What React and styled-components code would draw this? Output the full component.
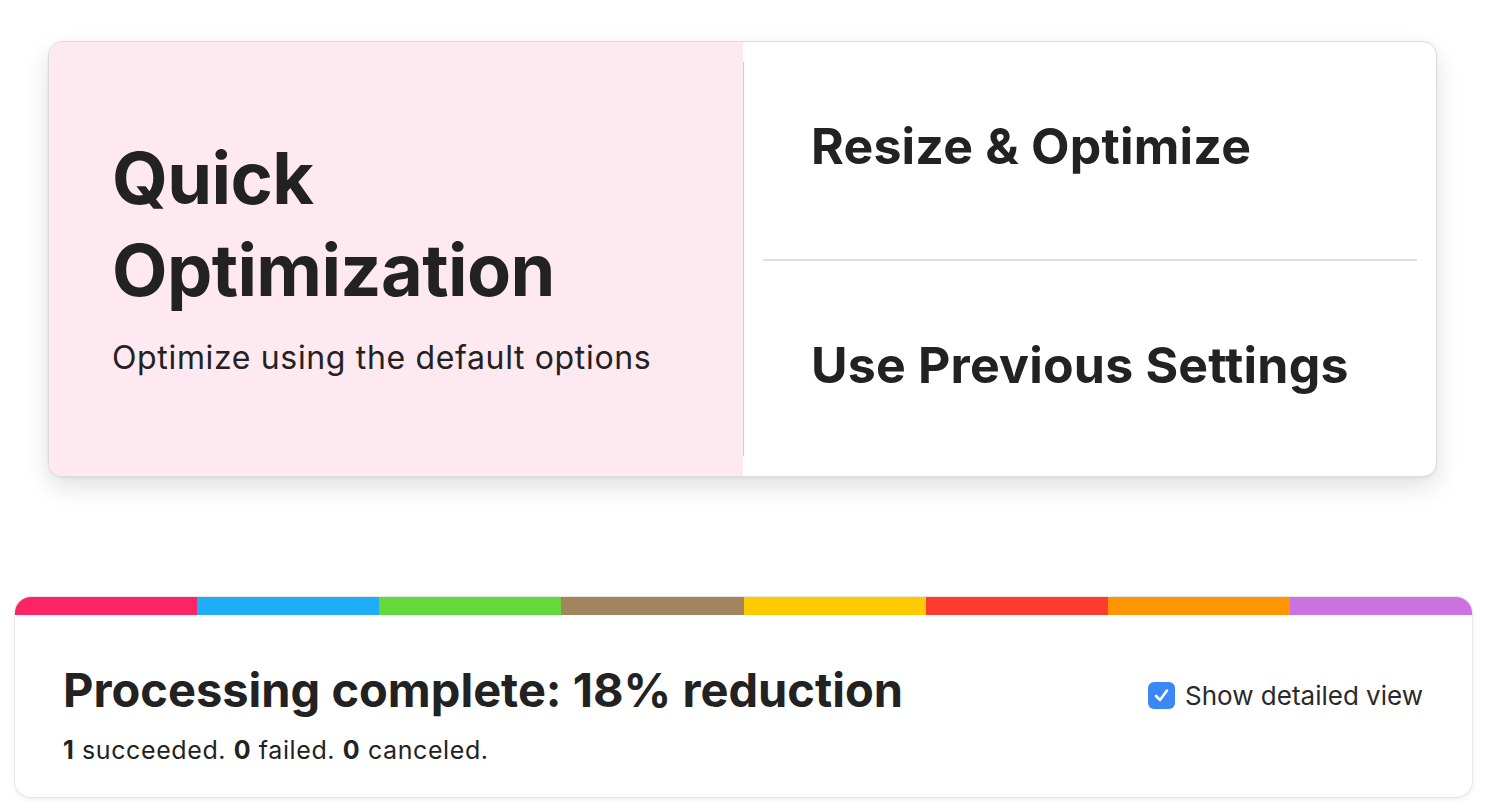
import React from "react";
import styled, { createGlobalStyle } from "styled-components";

const GlobalStyle = createGlobalStyle`
  html, body {
    margin: 0;
    padding: 0;
    background: #fff;
    font-family: Inter, "Noto Sans", sans-serif;
    color: #222;
  }
`;

const Page = styled.div`
  width: 1488px;
  height: 812px;
  padding-top: 41px;
  box-sizing: border-box;
  display: flex;
  flex-direction: column;
`;

const ChoiceCard = styled.div`
  margin-left: 48px;
  width: 1389px;
  height: 436px;
  box-sizing: border-box;
  display: flex;
  border: 1px solid #dcdcdc;
  border-radius: 14px;
  overflow: hidden;
  background: #fff;
  box-shadow: 0 10px 24px rgba(0, 0, 0, 0.12), 0 1px 3px rgba(0, 0, 0, 0.06);
`;

const QuickPane = styled.div`
  width: 694px;
  background: #ffe9f0;
  display: flex;
  flex-direction: column;
  justify-content: center;
  padding: 0 0 8px 63px;
  box-sizing: border-box;
`;

const QuickTitle = styled.h1`
  margin: 0;
  font-size: 72px;
  line-height: 92px;
  font-weight: 700;
  letter-spacing: -0.6px;
  color: #222;
`;

const QuickText = styled.p`
  margin: 22px 0 0;
  font-size: 32px;
  line-height: 40px;
  font-weight: 400;
  letter-spacing: 0.65px;
  color: #222;
`;

const Divider = styled.div`
  width: 1px;
  background: #cfcfcf;
  margin: 20px 0;
`;

const Options = styled.div`
  flex: 1;
  display: flex;
  flex-direction: column;
`;

const Option = styled.button`
  flex: 1;
  border: 0;
  background: transparent;
  text-align: left;
  padding: 0 0 ${(p) => p.$shift}px 67px;
  font-family: Inter, "Noto Sans", sans-serif;
  font-size: 50px;
  font-weight: 700;
  letter-spacing: 0.2px;
  color: #222;
  cursor: pointer;
`;

const Rule = styled.hr`
  margin: -2px 19px 0;
  border: 0;
  height: 2px;
  background: #dedede;
`;

const StatusCard = styled.div`
  margin-top: 120px;
  margin-left: 15px;
  width: 1457px;
  height: 200px;
  box-sizing: border-box;
  border-radius: 16px;
  overflow: hidden;
  background: #fff;
  box-shadow: 0 0 0 1px #e6e6e6, 0 2px 6px rgba(0, 0, 0, 0.08);
  display: flex;
  flex-direction: column;
`;

const ColorBar = styled.div`
  display: flex;
  height: 18px;
`;

const Stripe = styled.div`
  flex: 1;
  background: ${(p) => p.$color};
`;

const StatusBody = styled.div`
  flex: 1;
  display: flex;
  align-items: center;
  justify-content: space-between;
  padding: 14px 49px 0 48px;
`;

const StatusTitle = styled.h2`
  margin: 0;
  font-size: 47px;
  line-height: 56px;
  font-weight: 700;
  color: #222;
`;

const StatusCounts = styled.p`
  margin: 17px 0 0;
  font-size: 25px;
  line-height: 30px;
  letter-spacing: 0.6px;
  color: #222;
  b {
    font-weight: 700;
  }
`;

const CheckLabel = styled.label`
  display: flex;
  align-items: center;
  gap: 10px;
  font-size: 26px;
  color: #2a2a2a;
  margin-bottom: 36px;
`;

const CheckBox = styled.span`
  width: 27px;
  height: 27px;
  border-radius: 6px;
  background: #3a87f6;
  display: flex;
  align-items: center;
  justify-content: center;
`;

const stripes = [
  "#fd2466",
  "#1eadf6",
  "#63da39",
  "#a2845e",
  "#ffcb00",
  "#ff3b30",
  "#ff9500",
  "#cb72e0",
];

const App = () => {
  return (
    <Page>
      <GlobalStyle />
      <ChoiceCard>
        <QuickPane>
          <QuickTitle>
            Quick
            <br />
            Optimization
          </QuickTitle>
          <QuickText>Optimize using the default options</QuickText>
        </QuickPane>
        <Divider />
        <Options>
          <Option $shift={12}>Resize &amp; Optimize</Option>
          <Rule />
          <Option $shift={8}>Use Previous Settings</Option>
        </Options>
      </ChoiceCard>
      <StatusCard>
        <ColorBar>
          {stripes.map((c) => (
            <Stripe key={c} $color={c} />
          ))}
        </ColorBar>
        <StatusBody>
          <div>
            <StatusTitle>Processing complete: 18% reduction</StatusTitle>
            <StatusCounts>
              <b>1</b> succeeded. <b>0</b> failed. <b>0</b> canceled.
            </StatusCounts>
          </div>
          <CheckLabel>
            <CheckBox>
              <svg width="21" height="21" viewBox="0 0 21 21">
                <path
                  d="M5 11 L9 15 L16 5.5"
                  fill="none"
                  stroke="#fff"
                  strokeWidth="2.6"
                  strokeLinecap="round"
                  strokeLinejoin="round"
                />
              </svg>
            </CheckBox>
            Show detailed view
          </CheckLabel>
        </StatusBody>
      </StatusCard>
    </Page>
  );
};

export default App;
